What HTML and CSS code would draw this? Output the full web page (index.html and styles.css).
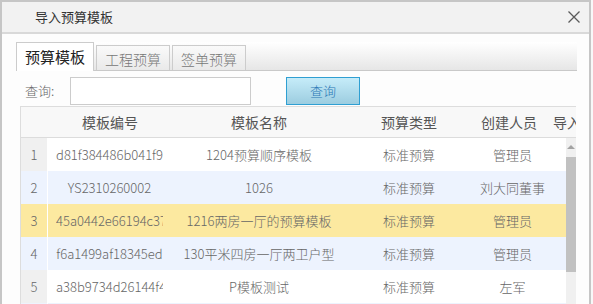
FILE: index.html
```html
<!DOCTYPE html>
<html lang="zh-CN">
<head>
<meta charset="utf-8">
<title>导入预算模板</title>
<link rel="stylesheet" href="styles.css">
</head>
<body>
<div class="dialog">
  <div class="titlebar">
    <span class="title">导入预算模板</span>
    <span class="close" aria-label="关闭">
      <svg width="12" height="12" viewBox="0 0 12 12"><path d="M0.5 0.5 L11.5 11.5 M11.5 0.5 L0.5 11.5" stroke="#5a5a5a" stroke-width="1.3" fill="none"/></svg>
    </span>
  </div>
  <div class="content">
    <div class="tabs">
      <div class="tab active">预算模板</div>
      <div class="tab">工程预算</div>
      <div class="tab">签单预算</div>
    </div>
    <div class="query">
      <span class="qlabel">查询:</span>
      <input class="qinput" type="text">
      <button class="qbtn">查询</button>
    </div>
    <div class="grid">
      <div class="ghead">
        <div class="hc rn"></div>
        <div class="hc">模板编号</div>
        <div class="hc">模板名称</div>
        <div class="hc">预算类型</div>
        <div class="hc">创建人员</div>
        <div class="hc last">导入</div>
      </div>
      <div class="gbody">
        <div class="rows">
          <div class="row">
            <div class="rn">1</div>
            <div class="c c1"><div class="t">d81f384486b041f9</div></div>
            <div class="c"><div class="t">1204预算顺序模板</div></div>
            <div class="c"><div class="t">标准预算</div></div>
            <div class="c c4"><div class="t">管理员</div></div>
            <div class="c"></div>
          </div>
          <div class="row alt">
            <div class="rn">2</div>
            <div class="c c1"><div class="t">YS2310260002</div></div>
            <div class="c"><div class="t">1026</div></div>
            <div class="c"><div class="t">标准预算</div></div>
            <div class="c c4"><div class="t">刘大同董事长</div></div>
            <div class="c"></div>
          </div>
          <div class="row sel">
            <div class="rn">3</div>
            <div class="c c1"><div class="t">45a0442e66194c37</div></div>
            <div class="c"><div class="t">1216两房一厅的预算模板</div></div>
            <div class="c"><div class="t">标准预算</div></div>
            <div class="c c4"><div class="t">管理员</div></div>
            <div class="c"></div>
          </div>
          <div class="row alt">
            <div class="rn">4</div>
            <div class="c c1"><div class="t">f6a1499af18345ed</div></div>
            <div class="c"><div class="t">130平米四房一厅两卫户型</div></div>
            <div class="c"><div class="t">标准预算</div></div>
            <div class="c c4"><div class="t">管理员</div></div>
            <div class="c"></div>
          </div>
          <div class="row">
            <div class="rn">5</div>
            <div class="c c1"><div class="t">a38b9734d26144f4</div></div>
            <div class="c"><div class="t">P模板测试</div></div>
            <div class="c"><div class="t">标准预算</div></div>
            <div class="c c4"><div class="t">左军</div></div>
            <div class="c"></div>
          </div>
          <div class="row alt">
            <div class="rn">6</div>
            <div class="c c1"></div>
            <div class="c"></div>
            <div class="c"></div>
            <div class="c c4"></div>
            <div class="c"></div>
          </div>
        </div>
        <div class="vscroll">
          <div class="sarrow"></div>
          <div class="sthumb"></div>
        </div>
      </div>
    </div>
  </div>
</div>
</body>
</html>
```
FILE: styles.css
```css
html, body {
  margin: 0;
  padding: 0;
  width: 593px;
  height: 304px;
  overflow: hidden;
  background: #f8f8f8;
}
body {
  font-family: "Noto Sans CJK SC", "Noto Sans", sans-serif;
  font-size: 13px;
  font-weight: 300;
  color: #666;
}
.dialog {
  width: 587px;
  height: 310px;
  border-left: 2px solid #c6c6c6;
  border-right: 2px solid #c6c6c6;
  border-top: 2px solid #c6c6c6;
  background: #fdfdfd;
}
.titlebar {
  height: 30px;
  background: #f2f2f2;
  border-bottom: 2px solid #d9d9d9;
  display: flex;
  align-items: center;
  justify-content: space-between;
  padding: 0 9px 0 33px;
}
.title {
  font-size: 13px;
  font-weight: 400;
  color: #333;
  line-height: 16px;
}
.close {
  display: flex;
  width: 12px;
  height: 12px;
  margin-top: -1px;
}
.content {
  padding: 8px 12px 0 14px;
}
.tabs {
  height: 28px;
  border-bottom: 1px solid #c9c9c9;
  background: linear-gradient(#ffffff, #e6e6e6);
  display: flex;
  align-items: flex-end;
  gap: 2px;
}
.tab {
  box-sizing: border-box;
  width: 74px;
  height: 25px;
  border: 1px solid #cccccc;
  border-bottom: none;
  background: linear-gradient(#fafafa, #e9e9e9);
  font-size: 14px;
  color: #777;
  line-height: 24px;
  text-align: center;
  padding-top: 1px;
}
.tab.active {
  width: 78px;
  height: 29px;
  margin-bottom: -1px;
  background: #ffffff;
  color: #222;
  font-size: 15px;
  font-weight: 400;
  line-height: 26px;
  padding-top: 1px;
  align-self: flex-end;
}
.query {
  display: flex;
  align-items: center;
  height: 28px;
  margin-top: 6px;
}
.qlabel {
  width: 45px;
  margin-left: 9px;
  color: #666;
  line-height: 16px;
}
.qinput {
  box-sizing: border-box;
  width: 181px;
  height: 28px;
  border: 1px solid #cccccc;
  background: #fff;
  margin: 0;
  padding: 0 4px;
  outline: none;
}
.qbtn {
  box-sizing: border-box;
  width: 74px;
  height: 28px;
  margin: 0 0 0 35px;
  padding: 0;
  border: 1px solid #2f9fd2;
  background: linear-gradient(#c6ecf9, #9ccde0);
  color: #2a78b6;
  font-family: "Noto Sans CJK SC", "Noto Sans", sans-serif;
  font-size: 13px;
  font-weight: 300;
  line-height: 16px;
}
.grid {
  margin: 1px 0 0 4px;
  width: 556px;
  border-top: 1px solid #dddddd;
  border-left: 1px solid #dddddd;
  box-sizing: border-box;
}
.ghead {
  display: grid;
  grid-template-columns: 27px 124px 174px 126px 74px 1fr;
  height: 30px;
  border-bottom: 1px solid #dcdcdc;
  background: #f8f8f8;
  overflow: hidden;
}
.hc {
  font-size: 14px;
  font-weight: 400;
  color: #555;
  text-align: center;
  line-height: 30px;
  white-space: nowrap;
  overflow: hidden;
}
.hc.last {
  text-align: left;
  padding-left: 7px;
}
.gbody {
  display: flex;
}
.rows {
  flex: 1;
}
.row {
  display: grid;
  grid-template-columns: 27px 124px 174px 126px 74px 1fr;
  height: 33px;
  background: #ffffff;
}
.row.alt {
  background: #edf3fe;
}
.row.sel {
  background: #fce9a0;
}
.row .rn {
  background: #f0f0f0;
  border-right: 1px solid #ffffff;
  text-align: center;
  line-height: 33px;
  color: #666;
}
.row.alt .rn {
  background: #edf3fe;
}
.row.sel .rn {
  background: #fce9a0;
}
.c {
  display: flex;
  align-items: center;
  min-width: 0;
  padding: 0 4px;
}
.c1 {
  padding: 0 9px 0 8px;
}
.c4 {
  padding: 0 1px 0 8px;
}
.t {
  flex: 1;
  min-width: 0;
  overflow: hidden;
  white-space: nowrap;
  text-align: center;
  line-height: 18px;
  color: #666;
}
.vscroll {
  width: 10px;
  background: #f0f0f0;
  display: flex;
  flex-direction: column;
  align-items: center;
}
.sarrow {
  width: 0;
  height: 0;
  border-left: 4px solid transparent;
  border-right: 4px solid transparent;
  border-bottom: 4px solid #a3a3a3;
  margin-top: 7px;
  margin-bottom: 8px;
}
.sthumb {
  width: 10px;
  height: 115px;
  background: #c1c1c1;
}
```
